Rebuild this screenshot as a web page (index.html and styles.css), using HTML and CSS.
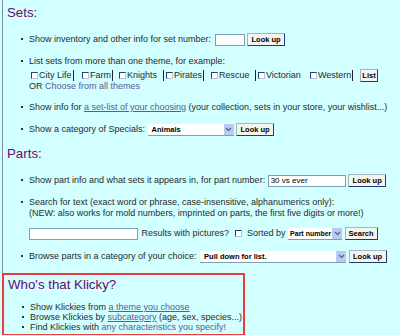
FILE: index.html
```html
<!DOCTYPE html>
<html lang="en">
<head>
  <meta charset="UTF-8" />
  <title>Klicky Search</title>
  <link rel="stylesheet" href="styles.css">
</head>
<body>

  <div class="page">

    <!-- Sets -->
    <h2 class="title">Sets:</h2>
    <ul class="menu">
      <li class="row">Show inventory and other info for set number:
        <span class="field field-set"></span>
        <span class="btn btn-look">Look up</span>
      </li>
      <li>List sets from more than one theme, for example:
        <div class="themes">
          <label><span class="box"></span>City Life<span class="caret"></span></label>
          <label><span class="box"></span>Farm<span class="caret"></span></label>
          <label><span class="box"></span>Knights</label>
          <label><span class="caret caret-left"></span><span class="box"></span>Pirates<span class="caret"></span></label>
          <label><span class="box"></span>Rescue</label>
          <label><span class="caret caret-left"></span><span class="box"></span>Victorian</label>
          <label><span class="box"></span>Western<span class="caret"></span></label>
          <span class="btn btn-list">List</span>
        </div>
        <div class="or">OR <a class="plain" href="#">Choose from all themes</a></div>
      </li>
      <li>Show info for <a href="#">a set-list of your choosing</a> (your collection, sets in your store, your wishlist...)</li>
      <li class="row">Show a category of Specials:
        <span class="select sel-specials">Animals<span class="arrow"><svg width="7" height="5" viewBox="0 0 7 5"><path d="M1 1 L3.5 3.5 L6 1" fill="none" stroke="#4d6185" stroke-width="1.2"/></svg></span></span>
        <span class="btn btn-look">Look up</span>
      </li>
    </ul>

    <!-- Parts -->
    <h2 class="title">Parts:</h2>
    <ul class="menu">
      <li class="row">Show part info and what sets it appears in, for part number:
        <span class="field field-part">30 vs ever</span>
        <span class="btn btn-look">Look up</span>
      </li>
      <li>Search for text (exact word or phrase, case-insensitive, alphanumerics only):<br>
        (NEW: also works for mold numbers, imprinted on parts, the first five digits or more!)
        <div class="search-row">
          <span class="field field-text"></span>
          Results with pictures? <span class="box"></span> Sorted by
          <span class="select sel-sort">Part number<span class="arrow"><svg width="7" height="5" viewBox="0 0 7 5"><path d="M1 1 L3.5 3.5 L6 1" fill="none" stroke="#4d6185" stroke-width="1.2"/></svg></span></span>
          <span class="btn btn-search">Search</span>
        </div>
      </li>
      <li class="row">Browse parts in a category of your choice:
        <span class="select sel-cat">Pull down for list.<span class="arrow"><svg width="7" height="5" viewBox="0 0 7 5"><path d="M1 1 L3.5 3.5 L6 1" fill="none" stroke="#4d6185" stroke-width="1.2"/></svg></span></span>
        <span class="btn btn-look">Look up</span>
      </li>
    </ul>

    <!-- Klickies -->
    <div class="klicky">
      <h2 class="title">Who's that Klicky?</h2>
      <ul class="menu menu-tight">
        <li>Show Klickies from <a href="#">a theme you choose</a></li>
        <li>Browse Klickies by <a href="#">subcategory</a> (age, sex, species...)</li>
        <li>Find Klickies with <a class="plain" href="#">any characteristics you specify!</a></li>
      </ul>
    </div>

  </div>

</body>
</html>
```

FILE: styles.css
```css
body {
  margin: 0;
  background: #d2ffff;
  font-family: 'Liberation Sans', Arial, sans-serif;
  font-size: 9px;
  color: #2a2a2a;
}

.page {
  margin-left: 2px;
  border-left: 1px solid #7d8e9c;
  height: 335px;
  padding-top: 5px;
  box-sizing: border-box;
}

.title {
  margin: 0 0 0 4px;
  font-size: 13.3px;
  font-weight: normal;
  color: #6a0a6a;
  line-height: 16px;
}

.menu {
  list-style: none;
  margin: 12px 0 0 0;
  padding: 0 0 0 26px;
}

.menu li {
  line-height: 11px;
  margin-bottom: 10px;
}

.menu li::before {
  content: "";
  display: inline-block;
  width: 2px;
  height: 2px;
  background: #333;
  margin: 0 6px 1px -8px;
  vertical-align: middle;
}

a {
  color: #5c5c94;
}

a.plain {
  text-decoration: none;
}

/* form bits */
.field {
  display: inline-block;
  vertical-align: middle;
  height: 10px;
  background: #fff;
  border: 1px solid #7f9db9;
  font-size: 8px;
  line-height: 10px;
  padding-left: 2px;
  color: #000;
  white-space: nowrap;
}

.field-set { width: 26px; margin-left: 1px; }
.field-part { width: 74px; }
.field-text { width: 105px; margin-right: 1px; }

.btn {
  display: inline-block;
  vertical-align: middle;
  height: 11px;
  line-height: 11px;
  padding: 0;
  background: #f5f5ef;
  border: 1px solid #a9b4c0;
  border-right-color: #1d3c74;
  border-bottom-color: #1d3c74;
  border-radius: 1px;
  color: #000;
  font-size: 7.5px;
  font-weight: bold;
  text-align: center;
  white-space: nowrap;
}

.btn-look { width: 36px; }
.btn-list { width: 16px; margin-left: 1px; }
.btn-search { width: 31px; }

.select {
  display: inline-flex;
  align-items: center;
  justify-content: space-between;
  vertical-align: middle;
  height: 11px;
  background: #fff;
  border-bottom: 1px solid #7f9db9;
  font-size: 7.5px;
  font-weight: bold;
  color: #000;
  padding-left: 4px;
  white-space: nowrap;
}

.select .arrow {
  display: flex;
  align-items: center;
  justify-content: center;
  width: 10px;
  height: 11px;
  background: #b9cbf3;
}

.sel-specials { width: 82px; }
.sel-sort { width: 52px; font-size: 7px; padding-left: 2px; }
.sel-cat { width: 142px; margin-left: 1px; }

.box {
  display: inline-block;
  width: 5px;
  height: 5px;
  border: 1px solid #2d3f6a;
  border-right-color: #b7c3d8;
  border-bottom-color: #b7c3d8;
  background: #fff;
  vertical-align: middle;
  margin-right: 1px;
}

/* themes */
.themes {
  display: grid;
  grid-template-columns: 51px 37px 47px 45px 47px 52px 49px auto;
  align-items: center;
  margin: 2px 0 0 2px;
  height: 12px;
}

.themes label {
  white-space: nowrap;
}

.caret {
  display: inline-block;
  width: 1px;
  height: 11px;
  background: #222;
  vertical-align: middle;
  margin-left: 1px;
}

.caret-left {
  margin: 0 2px 0 -3px;
}

.or {
  margin-top: 0;
}

.search-row {
  margin-top: 8px;
  white-space: nowrap;
}

.search-row .box {
  margin: 0 3px;
}

/* klicky box */
.klicky {
  width: 239px;
  margin: 0 0 0 -1px;
  border: 2px solid #f23a3a;
  padding: 2px 0 2px 0;
}

.menu-tight {
  margin-top: 9px;
}

.menu-tight li {
  margin-bottom: 0;
  line-height: 10px;
}
```
